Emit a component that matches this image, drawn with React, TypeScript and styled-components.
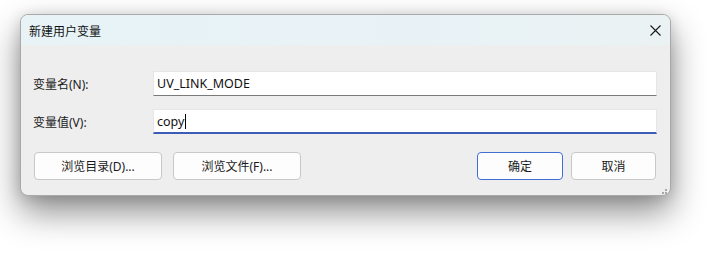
import React from "react";
import styled, { createGlobalStyle } from "styled-components";

const Global = createGlobalStyle`
  html, body {
    margin: 0;
    padding: 0;
    background: #ffffff;
  }
  body {
    font-family: "Noto Sans", "Noto Sans CJK SC", sans-serif;
    font-size: 12px;
    color: #1a1a1a;
  }
`;

const Page = styled.div`
  width: 707px;
  height: 255px;
  padding: 14px 0 0 20px;
  box-sizing: border-box;
  overflow: hidden;
`;

const Dialog = styled.div`
  position: relative;
  width: 651px;
  height: 182px;
  box-sizing: border-box;
  border: 1px solid #a9a9a9;
  border-radius: 8px;
  background: #eeeeee;
  display: flex;
  flex-direction: column;
  box-shadow: 0 16px 34px rgba(0, 0, 0, 0.45), 0 2px 14px rgba(0, 0, 0, 0.14);
  overflow: hidden;
`;

const TitleBar = styled.div`
  height: 30px;
  flex-shrink: 0;
  display: flex;
  align-items: center;
  justify-content: space-between;
  padding: 0 0 0 8px;
  background: linear-gradient(90deg, #e7f3f6 0%, #e8f2f7 50%, #eaf2f3 100%);
`;

const Title = styled.span`
  font-family: "Noto Sans CJK SC", sans-serif;
  font-size: 12px;
  color: #111;
`;

const Close = styled.div`
  width: 30px;
  height: 30px;
  display: flex;
  align-items: center;
  justify-content: center;
`;

const Body = styled.div`
  flex: 1;
  display: flex;
  flex-direction: column;
  padding: 26px 13px 0 12px;
`;

const Row = styled.div`
  display: flex;
  align-items: center;
  height: 25px;
  margin-bottom: 13px;
`;

const Label = styled.label`
  width: 120px;
  font-family: "Noto Sans", "Noto Sans CJK SC", sans-serif;
  font-size: 12px;
  color: #1a1a1a;
`;

const Field = styled.div<{ $focused?: boolean }>`
  flex: 1;
  height: 25px;
  box-sizing: border-box;
  background: #ffffff;
  border: 1px solid #e6e6e6;
  border-bottom: ${(p) => (p.$focused ? "2px solid #3b5cb8" : "1px solid #7a7a7a")};
  display: flex;
  align-items: center;
  padding: 0 3px;
  font-size: 12.5px;
  color: #111;
`;

const Caret = styled.span`
  display: inline-block;
  width: 1px;
  height: 15px;
  background: #000;
  margin-left: 1px;
`;

const Buttons = styled.div`
  display: flex;
  align-items: center;
  margin-top: 5px;
  padding-left: 1px;
  padding-right: 1px;
`;

const Button = styled.button<{ $w: number; $primary?: boolean }>`
  width: ${(p) => p.$w}px;
  height: 28px;
  margin-right: 11px;
  box-sizing: border-box;
  border-radius: 4px;
  border: 1px solid ${(p) => (p.$primary ? "#3f6fd1" : "#c8c8c8")};
  background: #fdfdfd;
  font-family: "Noto Sans", "Noto Sans CJK SC", sans-serif;
  font-size: 12px;
  color: #1a1a1a;
  padding: 0;
  &:last-child {
    margin-right: 0;
  }
`;

const Spacer = styled.div`
  flex: 1;
`;

const Grip = styled.div`
  position: absolute;
  right: 3px;
  bottom: 3px;
  width: 8px;
  height: 8px;
`;

export default function App() {
  return (
    <>
      <Global />
      <Page>
        <Dialog>
          <TitleBar>
            <Title>新建用户变量</Title>
            <Close>
              <svg width="11" height="11" viewBox="0 0 11 11">
                <path d="M0.5 0.5 L10.5 10.5 M10.5 0.5 L0.5 10.5" stroke="#1a1a1a" strokeWidth="1.1" />
              </svg>
            </Close>
          </TitleBar>
          <Body>
            <Row>
              <Label>变量名(N):</Label>
              <Field>UV_LINK_MODE</Field>
            </Row>
            <Row>
              <Label>变量值(V):</Label>
              <Field $focused>
                copy
                <Caret />
              </Field>
            </Row>
            <Buttons>
              <Button $w={128}>浏览目录(D)...</Button>
              <Button $w={128}>浏览文件(F)...</Button>
              <Spacer />
              <Button $w={86} $primary style={{ marginRight: 8 }}>
                确定
              </Button>
              <Button $w={85}>取消</Button>
            </Buttons>
          </Body>
          <Grip>
            <svg width="8" height="8" viewBox="0 0 8 8">
              <rect x="6" y="0" width="2" height="2" fill="#a8a8a8" />
              <rect x="3" y="3" width="2" height="2" fill="#a8a8a8" />
              <rect x="6" y="3" width="2" height="2" fill="#a8a8a8" />
              <rect x="0" y="6" width="2" height="2" fill="#a8a8a8" />
              <rect x="3" y="6" width="2" height="2" fill="#a8a8a8" />
              <rect x="6" y="6" width="2" height="2" fill="#a8a8a8" />
            </svg>
          </Grip>
        </Dialog>
      </Page>
    </>
  );
}
